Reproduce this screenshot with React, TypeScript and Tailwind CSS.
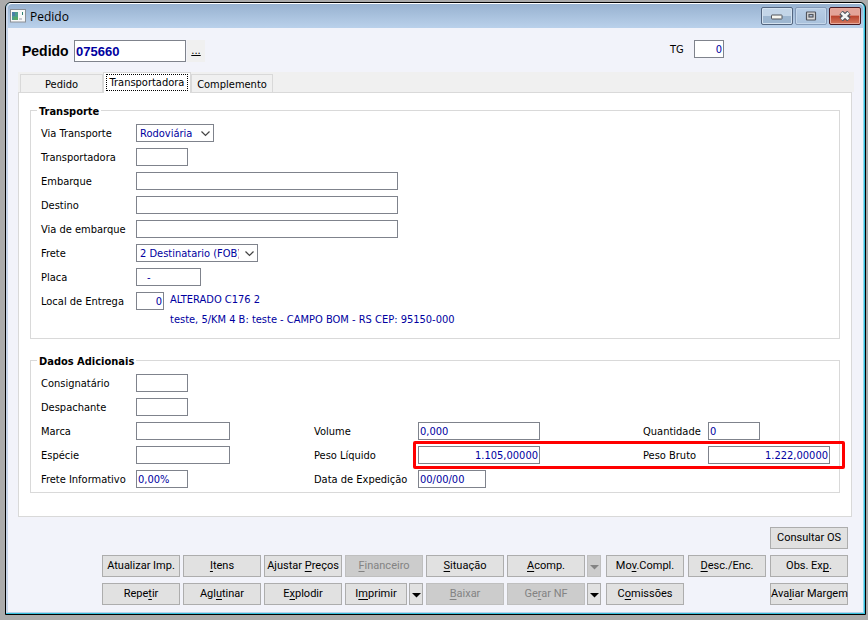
import React from "react";

type FieldProps = {
  id: string;
  label: string;
  width: string;
  value?: string;
  align?: string;
};

const labelText = "whitespace-nowrap pt-0.5 text-black";
const inputBox =
  "h-[18px] border border-[#7f838c] bg-white text-[#0000a0] outline-none";

const Field: React.FC<FieldProps> = ({ id, label, width, value = "", align = "pl-px" }) => (
  <>
    <label htmlFor={id} className={labelText}>
      {label}
    </label>
    <input id={id} defaultValue={value} className={`${inputBox} ${width} ${align}`} />
  </>
);

type SelectProps = { id: string; label: string; width: string; value: string };

const SelectField: React.FC<SelectProps> = ({ id, label, width, value }) => (
  <>
    <label htmlFor={id} className={labelText}>
      {label}
    </label>
    <div className={`relative ${width}`}>
      <select
        id={id}
        className={`${inputBox} block w-full appearance-none overflow-hidden pl-[3px] pr-[18px] pt-0.5`}
      >
        <option>{value}</option>
      </select>
      <svg
        className="pointer-events-none absolute right-1 top-[7px]"
        width="9"
        height="6"
        viewBox="0 0 9 6"
        fill="none"
        stroke="#444"
        strokeWidth="1.2"
      >
        <path d="M0.5 0.5 L4.5 4.5 L8.5 0.5" />
      </svg>
    </div>
  </>
);

type ButtonProps = {
  // "_" goes before the shortcut letter
  text: string;
  disabled?: boolean;
  width?: string;
};

const ActionButton: React.FC<ButtonProps> = ({ text, disabled, width = "w-[78px]" }) => {
  const [before, after] = text.split("_");
  return (
    <button
      disabled={disabled}
      className={`h-[22px] whitespace-nowrap border border-[#adadad] bg-[#e1e1e1] text-center text-black disabled:border-[#bfbfbf] disabled:bg-[#cccccc] disabled:text-[#838383] ${width}`}
    >
      {before}
      {after && (
        <>
          <u className="underline-offset-2">{after[0]}</u>
          {after.slice(1)}
        </>
      )}
    </button>
  );
};

const ArrowButton: React.FC<{ label: string; disabled?: boolean }> = ({ label, disabled }) => (
  <button
    aria-label={label}
    disabled={disabled}
    className="flex h-[22px] w-[14px] items-center justify-center border border-[#adadad] bg-[#e1e1e1] pt-0.5 text-black disabled:border-[#bfbfbf] disabled:bg-[#cccccc] disabled:text-[#838383]"
  >
    <svg width="9" height="5" viewBox="0 0 9 5" className="shrink-0" fill="currentColor">
      <path d="M0 0 H9 L4.5 4.5 Z" />
    </svg>
  </button>
);

const TitleBar: React.FC = () => (
  <div className="flex h-[25px] items-center rounded-t-[4px] border-t border-white bg-linear-to-b from-[#98b2d0] to-[#bad1eb] pl-0.5 pr-0.5">
    <svg width="16" height="14" viewBox="0 0 16 14">
      <rect x="0.5" y="0.5" width="15" height="12.5" fill="#f8f8f8" stroke="#8b8f96" />
      <rect x="2" y="3" width="6" height="8" fill="#4c9c8c" />
      <rect x="2" y="3" width="3" height="4" fill="#4a7fa8" />
      <rect x="4" y="8" width="4" height="3" fill="#56a868" />
      <rect x="12" y="3" width="1" height="3" fill="#2f8070" />
      <rect x="9" y="9" width="3" height="2" fill="#c8c8d0" />
    </svg>
    <h1 className="ml-1 flex-1 pt-0.5 font-['Open_Sans',sans-serif] text-[12px] leading-4 text-black">
      Pedido
    </h1>
    <div className="flex gap-0.5">
      <button
        aria-label="Minimizar"
        className="flex h-[18px] w-8 items-center justify-center rounded-[2px] border border-[#53657f] bg-linear-to-b from-[#c3d5e8] from-50% to-[#9db6d0] to-50% pt-0.5 shadow-[inset_0_0_0_1px_#d4e2f0]"
      >
        <svg width="12" height="6" viewBox="0 0 12 6">
          <rect x="0.5" y="1" width="10.5" height="4" rx="0.5" fill="#f6f6f0" stroke="#51545c" />
        </svg>
      </button>
      <button
        aria-label="Maximizar"
        className="flex h-[18px] w-8 items-center justify-center rounded-[2px] border border-[#8398b6] bg-linear-to-b from-[#b9cee6] to-[#a9c1dc] shadow-[inset_0_0_0_1px_#c5d7eb]"
      >
        <svg width="12" height="10" viewBox="0 0 12 10">
          <rect x="1.5" y="1" width="9" height="8" rx="0.5" fill="#dadada" stroke="#51545c" strokeWidth="1.2" />
          <rect x="4" y="3.5" width="4" height="2.5" fill="#b8cbe4" stroke="#51545c" strokeWidth="1.2" />
        </svg>
      </button>
      <button
        aria-label="Fechar"
        className="flex h-[18px] w-8 items-center justify-center rounded-[2px] border border-[#4a1820] bg-linear-to-b from-[#e3a398] from-45% via-[#b9412c] via-50% to-[#d4785f] shadow-[inset_0_0_0_1px_#e8a99c]"
      >
        <svg width="12" height="10" viewBox="0 0 12 10">
          <path d="M2 1.5 L10 8.5 M10 1.5 L2 8.5" stroke="#51545c" strokeWidth="5" />
          <path d="M2.5 1.8 L9.5 8.2 M9.5 1.8 L2.5 8.2" stroke="#f4f4f4" strokeWidth="2.6" />
        </svg>
      </button>
    </div>
  </div>
);

const OrderHeader: React.FC = () => (
  <div className="flex items-start pl-[14px] pr-[139px] pt-3">
    <label
      htmlFor="pedido"
      className="w-[52px] font-['Liberation_Sans',sans-serif] text-[14px] font-bold leading-[22px]"
    >
      Pedido
    </label>
    <input
      id="pedido"
      defaultValue="075660"
      className="h-[22px] w-28 border border-[#7f838c] bg-white pl-px font-['Liberation_Sans',sans-serif] text-[13px] font-bold text-[#0000a0] outline-none"
    />
    <button className="ml-px h-[22px] w-[18px] bg-[#f0f0f0] text-[11px] leading-[22px] underline">
      ...
    </button>
    <div className="ml-auto flex items-center">
      <label htmlFor="tg" className="w-6 pt-0.5">
        TG
      </label>
      <input id="tg" defaultValue="0" className={`${inputBox} w-[30px] pr-px text-right`} />
    </div>
  </div>
);

const Tabs: React.FC = () => (
  <div
    role="tablist"
    className="ml-[10px] mr-[9px] mt-[10px] flex h-5 items-end bg-[#f0f0f0] pl-0.5"
  >
    <button
      role="tab"
      aria-selected="false"
      className="h-[18px] w-[83px] border border-b-0 border-[#d9d9d9] leading-[20px]"
    >
      Pedido
    </button>
    <button
      role="tab"
      aria-selected="true"
      className="relative -mb-px h-[21px] w-[88px] border border-b-0 border-[#d9d9d9] bg-white px-0.5 pb-0.5 pt-px"
    >
      <span className="block h-[17px] whitespace-nowrap border border-dotted border-black leading-[15px]">
        Transportadora
      </span>
    </button>
    <button
      role="tab"
      aria-selected="false"
      className="h-[18px] w-[82px] whitespace-nowrap border border-b-0 border-[#d9d9d9] leading-[20px]"
    >
      Complemento
    </button>
  </div>
);

const fieldset = "border border-[#d9d9d9] pl-[10px] pt-[3px]";
const legend = "-ml-1 h-[15px] px-0.5 font-bold leading-[17px]";

const Transporte: React.FC = () => (
  <fieldset className={`${fieldset} pb-2`}>
    <legend className={legend}>Transporte</legend>
    <div className="grid auto-rows-[24px] grid-cols-[95px_1fr] items-center">
      <SelectField id="via-transporte" label="Via Transporte" width="w-[78px]" value="Rodoviária" />
      <Field id="transportadora" label="Transportadora" width="w-[52px]" />
      <Field id="embarque" label="Embarque" width="w-[262px]" />
      <Field id="destino" label="Destino" width="w-[262px]" />
      <Field id="via-embarque" label="Via de embarque" width="w-[262px]" />
      <SelectField id="frete" label="Frete" width="w-[122px]" value="2 Destinatario (FOB)" />
      <Field id="placa" label="Placa" width="w-[65px]" value="-" align="pl-[10px]" />
    </div>
    <div className="flex items-start">
      <div className="grid h-6 grid-cols-[95px_28px] items-center">
        <Field
          id="local-entrega"
          label="Local de Entrega"
          width="w-[28px]"
          value="0"
          align="pr-px text-right"
        />
      </div>
      <div className="ml-1.5 pt-px leading-5 text-[#0000a0]">
        <p>ALTERADO C176 2</p>
        <p>teste, 5/KM 4 B: teste - CAMPO BOM - RS CEP: 95150-000</p>
      </div>
    </div>
  </fieldset>
);

const DadosAdicionais: React.FC = () => (
  <fieldset className={`${fieldset} mt-[14px] pb-px pr-[9px]`}>
    <legend className={legend}>Dados Adicionais</legend>
    <div className="relative grid auto-rows-[24px] grid-cols-[95px_178fr_104px_225fr_65px_122px] items-center">
      <Field id="consignatario" label="Consignatário" width="w-[52px]" />
      <span className="col-span-4" />
      <Field id="despachante" label="Despachante" width="w-[52px]" />
      <span className="col-span-4" />
      <Field id="marca" label="Marca" width="w-[94px]" />
      <Field id="volume" label="Volume" width="w-[122px]" value="0,000" />
      <Field id="quantidade" label="Quantidade" width="w-[52px]" value="0" />
      <Field id="especie" label="Espécie" width="w-[94px]" />
      <Field
        id="peso-liquido"
        label="Peso Líquido"
        width="w-[122px]"
        value="1.105,00000"
        align="pr-px text-right"
      />
      <Field
        id="peso-bruto"
        label="Peso Bruto"
        width="w-[122px]"
        value="1.222,00000"
        align="pr-px text-right"
      />
      <Field id="frete-informativo" label="Frete Informativo" width="w-[52px]" value="0,00%" />
      <Field id="data-expedicao" label="Data de Expedição" width="w-[68px]" value="00/00/00" />
      {/* highlight over both weights */}
      <div className="pointer-events-none absolute -right-[15px] left-[372px] top-[70px] h-7 rounded-[2px] border-3 border-[#ff0000]" />
    </div>
  </fieldset>
);

const Actions: React.FC = () => (
  <div className="flex items-end justify-end gap-[5px] pb-[7px] pr-[15px] pt-[10px] font-['Roboto',sans-serif] text-[11px] leading-5">
    <div className="grid grid-cols-[78px_78px_78px_78px_78px_94px] gap-x-[3px] gap-y-1.5">
      <ActionButton text="Atualizar Imp." />
      <ActionButton text="_Itens" />
      <ActionButton text="Ajustar _Preços" />
      <ActionButton text="_Financeiro" disabled />
      <ActionButton text="_Situação" />
      <div className="flex justify-between">
        <ActionButton text="_Acomp." />
        <ArrowButton label="Opções de acompanhamento" disabled />
      </div>
      <ActionButton text="Repe_tir" />
      <ActionButton text="Agl_utinar" />
      <ActionButton text="E_xplodir" />
      <div className="flex justify-between">
        <ActionButton text="I_mprimir" width="w-[62px]" />
        <ArrowButton label="Opções de impressão" />
      </div>
      <ActionButton text="_Baixar" disabled />
      <div className="flex justify-between">
        <ActionButton text="Ge_rar NF" disabled />
        <ArrowButton label="Opções de nota fiscal" />
      </div>
    </div>
    <div className="grid grid-cols-3 gap-x-1 gap-y-1.5">
      <span className="col-span-2" />
      <ActionButton text="Consultar OS" />
      <ActionButton text="Mo_v.Compl." />
      <ActionButton text="_Desc./Enc." />
      <ActionButton text="Obs. Ex_p." />
      <ActionButton text="C_omissões" />
      <span />
      <ActionButton text="Ava_liar Margem" />
    </div>
  </div>
);

const App: React.FC = () => {
  return (
    <div className="min-h-screen bg-[#ababab] pb-[5px] pl-[5px] pr-0.5 pt-0.5 font-['DejaVu_Sans_Condensed','DejaVu_Sans',sans-serif] text-[11px] leading-[14px] text-black">
      <div className="rounded-t-[6px] border border-black bg-[#35bfdc]">
        <div className="mb-px mr-px rounded-t-[5px] border-b border-l-2 border-r border-b-[#b9d1ea] border-l-[#c9d6ea] border-r-[#8fd9ee] bg-[#f2f3fa]">
          <TitleBar />
          <OrderHeader />
          <Tabs />
          <main className="ml-[10px] mr-[11px] border border-[#d9d9d9] bg-white pb-[23px] pl-[11px] pr-[11px] pt-[10px]">
            <Transporte />
            <DadosAdicionais />
          </main>
          <Actions />
        </div>
      </div>
    </div>
  );
};

export default App;
